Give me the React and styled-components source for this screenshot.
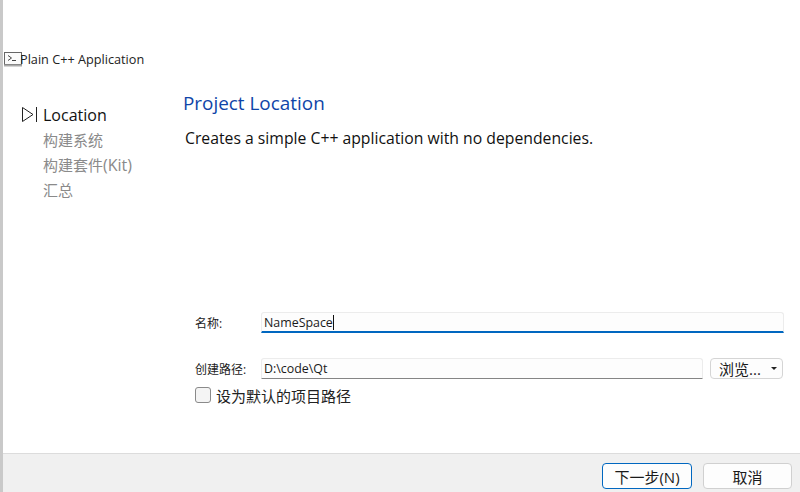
import React from "react";
import styled, { createGlobalStyle } from "styled-components";

const Global = createGlobalStyle`
  html, body { margin: 0; padding: 0; background: #fff; }
  #root { width: 800px; height: 492px; overflow: hidden; }
`;
const CJK = `"Open Sans", "Noto Sans CJK SC", sans-serif`;

const Page = styled.div`
  width: 800px; height: 492px; box-sizing: border-box;
  display: flex; flex-direction: column;
  border-left: 3px solid #c9c9c9;
  font-family: ${CJK}; color: #1a1a1a; background: #fff;
`;
const Content = styled.div`
  flex: 1; min-height: 0; display: flex; flex-direction: column; padding-top: 50px;
`;
const TitleBar = styled.div`
  height: 18px; display: flex; align-items: center; padding-left: 1px;
  font-size: 12.7px; color: #222;
`;
const TitleIcon = styled.svg`
  flex: none; margin-right: -3px;
`;
const Columns = styled.div`
  flex: 1; display: flex; min-height: 0;
`;
const Side = styled.nav`
  width: 180px; flex: none; display: flex; flex-direction: column;
  padding: 34px 0 0 19px; box-sizing: border-box;
`;
const Step = styled.div`
  height: 25px; display: flex; align-items: center; gap: 6px;
  padding-left: ${p => (p.$active ? 0 : 21)}px;
  font-size: ${p => (p.$active ? 16 : 15)}px; color: ${p => (p.$active ? "#111" : "#8a8a8a")};
`;
const Latin = styled.span`
  font-size: 16px;
`;
const Main = styled.main`
  flex: 1; min-width: 0; display: flex; flex-direction: column;
  padding: 23px 16px 0 0;
`;
const Heading = styled.h1`
  margin: 0; font-size: 18.9px; font-weight: 400; line-height: 24px; color: #0f45a8;
`;
const Description = styled.p`
  margin: 13px 0 0 2px; font-size: 15.75px; line-height: 20px; color: #111;
`;
const Form = styled.div`
  margin-top: 164px; display: grid;
  grid-template-columns: 66px 1fr; padding-left: 12px;
`;
const Label = styled.label`
  font-size: 12px; color: #222; display: flex; align-items: center;
  white-space: nowrap;
`;
const Field = styled.div`
  height: 21px; box-sizing: border-box; display: flex; align-items: center; padding: 0 2px;
  background: #fdfdfd; font-size: 12.4px; color: #1a1a1a; flex: 1;
  border: 1px solid #ececec;
  border-bottom: ${p => (p.$focus ? "2px solid #0067c0" : "1px solid #858585")};
  border-radius: 3px 3px 0 0;
`;
const Caret = styled.span`
  width: 1px; height: 15px; background: #111;
`;
const PathRow = styled.div`
  display: flex; align-items: center; gap: 7px; padding-right: 1px;
`;
const NameGap = styled.div`
  grid-column: 1 / -1; height: 25px;
`;
const Browse = styled.button`
  width: 73px; height: 21px; box-sizing: border-box; flex: none; padding: 0 5px 0 8px;
  display: flex; align-items: center; justify-content: space-between;
  background: #fdfdfd; border: 1px solid #d5d5d5; border-radius: 4px;
  font-family: ${CJK}; font-size: 15px; color: #1a1a1a;
`;
const Arrow = styled.span`
  width: 0; height: 0; border-left: 3px solid transparent; border-right: 3px solid transparent;
  border-top: 3px solid #222;
`;
const CheckRow = styled.label`
  grid-column: 1 / -1; margin-top: 6px; display: flex; align-items: center; gap: 5px;
  font-size: 15px; color: #222; height: 20px;
`;
const Box = styled.span`
  width: 14px; height: 14px; border: 1px solid #8a8a8a; border-radius: 3px; background: #f4f4f4;
`;
const Footer = styled.footer`
  height: 39px; flex: none; box-sizing: border-box; display: flex; justify-content: flex-end;
  align-items: flex-start; gap: 11px; padding: 9px 8px 0 0;
  background: #f0f0f0; border-top: 1px solid #dcdcdc;
`;
const Button = styled.button`
  width: ${p => (p.$primary ? 90 : 89)}px; height: 26px; box-sizing: border-box; padding: 0;
  background: #fdfdfd; border-radius: 4px;
  border: 1px solid ${p => (p.$primary ? "#0067c0" : "#d0d0d0")};
  font-family: ${CJK}; font-size: 15px; color: #1a1a1a;
`;

const TerminalIcon = () => (
  <TitleIcon width="19" height="15" viewBox="0 0 19 15" fill="none">
    <rect x="0.5" y="0.5" width="17" height="12" fill="#fbfbfb" stroke="#666" />
    <path d="M0 13.5H18" stroke="#aaa" strokeWidth="2" />
    <path d="M4 3.5l3.5 2.5L4 8.5M8 8.5h4" stroke="#444" />
  </TitleIcon>
);
const StepArrow = () => (
  <svg width="15" height="15" viewBox="0 0 15 15" fill="none">
    <path d="M0.5 0.5v14l10.5-7z" stroke="#222" strokeWidth="1" />
    <path d="M14.5 0v15" stroke="#222" strokeWidth="1" />
  </svg>
);

export default function App() {
  return (
    <>
      <Global />
      <Page>
        <Content>
          <TitleBar><TerminalIcon />Plain C++ Application</TitleBar>
          <Columns>
            <Side>
              <Step $active><StepArrow />Location</Step>
              <Step>构建系统</Step>
              <Step><span>构建套件<Latin>(Kit)</Latin></span></Step>
              <Step>汇总</Step>
            </Side>
            <Main>
              <Heading>Project Location</Heading>
              <Description>Creates a simple C++ application with no dependencies.</Description>
              <Form>
                <Label>名称:</Label>
                <Field $focus>NameSpace<Caret /></Field>
                <NameGap />
                <Label>创建路径:</Label>
                <PathRow>
                  <Field>D:\code\Qt</Field>
                  <Browse>浏览...<Arrow /></Browse>
                </PathRow>
                <CheckRow><Box />设为默认的项目路径</CheckRow>
              </Form>
            </Main>
          </Columns>
        </Content>
        <Footer>
          <Button $primary>下一步(N)</Button>
          <Button>取消</Button>
        </Footer>
      </Page>
    </>
  );
}
